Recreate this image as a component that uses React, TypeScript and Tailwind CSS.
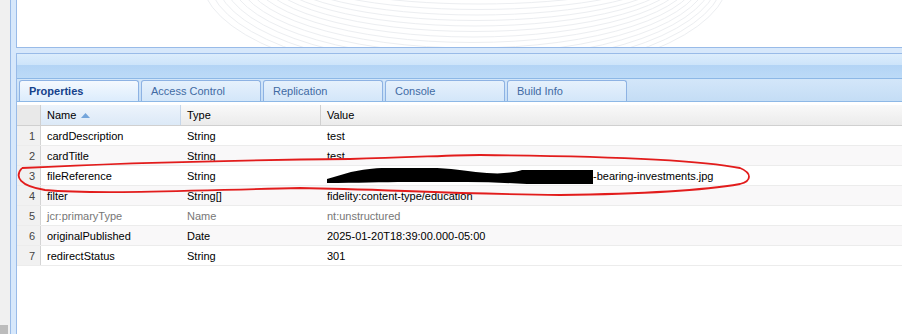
import React from "react";

type Row = { n: number; name: string; type: string; value: string; muted?: boolean; redacted?: boolean };

const rows: Row[] = [
  { n: 1, name: "cardDescription", type: "String", value: "test" },
  { n: 2, name: "cardTitle", type: "String", value: "test" },
  { n: 3, name: "fileReference", type: "String", value: "-bearing-investments.jpg", redacted: true },
  { n: 4, name: "filter", type: "String[]", value: "fidelity:content-type/education" },
  { n: 5, name: "jcr:primaryType", type: "Name", value: "nt:unstructured", muted: true },
  { n: 6, name: "originalPublished", type: "Date", value: "2025-01-20T18:39:00.000-05:00" },
  { n: 7, name: "redirectStatus", type: "String", value: "301" },
];

const tabs = ["Properties", "Access Control", "Replication", "Console", "Build Info"];

function Swirl() {
  const items = Array.from({ length: 15 }, (_, i) => i);
  return (
    <svg width="885" height="47" className="block">
      {items.map((i) => (
        <ellipse
          key={i}
          cx={462 - i * 1}
          cy={-30 + i * 0.5}
          rx={180 + i * 6}
          ry={34 + i * 5}
          fill="none"
          stroke="#eceef1"
          strokeWidth="1"
        />
      ))}
    </svg>
  );
}

function Redaction() {
  return (
    <svg width="266" height="19" viewBox="0 0 266 19" className="block shrink-0">
      <path
        d="M0 12 C8 10 16 7 24 5 C35 3 45 1 60 1 L110 1 C130 2 145 5 160 6 C175 7 185 6 195 3 L266 3 L266 17 L200 17 C180 16 160 15 140 15 L80 15 C55 15 30 16 0 16 Z"
        fill="#000"
      />
    </svg>
  );
}

export default function App() {
  return (
    <div className="relative w-[902px] h-[334px] overflow-hidden bg-[#f0f0f0] flex font-['Liberation_Sans',Arial,sans-serif] text-[11px]">
      <div className="w-[10px] flex flex-col justify-end">
        <div className="w-[8px] h-[9px] bg-[#bcbcbc]" />
      </div>
      <div className="flex-1 border-l border-[#99bbe8] bg-[#d7e8fb] pl-[5px] flex flex-col">
        <div className="h-[48px] border-l border-b border-[#99bbe8] bg-white overflow-hidden">
          <Swirl />
        </div>
        <div className="h-[5px]" />
        <div className="flex-1 border-l border-t border-[#99bbe8] bg-white flex flex-col">
          <div className="h-[25px] border-b border-[#8db8e6] flex flex-col">
            <div className="h-[11px] bg-linear-to-b from-[#dcedfc] to-[#cde4fa]" />
            <div className="flex-1 bg-linear-to-b from-[#b3d4f5] to-[#bcdaf7]" />
          </div>
          <div className="h-[23px] border-b border-[#8db8e6] bg-linear-to-b from-[#d3e6f9] to-[#c4ddf5] pt-[1px] pl-[2px] flex gap-[2px]">
            {tabs.map((t, i) => (
              <div
                key={t}
                className={
                  "w-[120px] h-[21px] rounded-t-[3px] border border-b-0 border-[#8db2e3] pl-[9px] pt-[1px] flex items-center " +
                  (i === 0
                    ? "bg-linear-to-b from-[#f4f9fe] to-[#dcecfc] font-bold text-[#15428b]"
                    : "bg-linear-to-b from-[#e6f1fc] to-[#d3e6f9] text-[#416aa3]")
                }
              >
                {t}
              </div>
            ))}
          </div>
          <div className="h-[3px] bg-white" />
          <div className="h-[21px] flex border-b border-[#d0d0d0] bg-linear-to-b from-[#f9f9f9] to-[#ebebeb] text-black">
            <div className="w-[24px] border-r border-[#d0d0d0] bg-[#e9e9e9]" />
            <div className="w-[140px] border-r border-[#c5d6ea] bg-linear-to-b from-[#edf4fc] to-[#dce9f7] pl-[6px] pt-[1px] flex items-center gap-[5px]">
              <span>Name</span>
              <svg width="9" height="5" viewBox="0 0 9 5">
                <path d="M0 5 L4.5 0 L9 5 Z" fill="#74a5db" />
              </svg>
            </div>
            <div className="w-[140px] border-r border-[#d0d0d0] pl-[6px] pt-[1px] flex items-center">Type</div>
            <div className="flex-1 pl-[6px] pt-[1px] flex items-center">Value</div>
          </div>
          {rows.map((r) => (
            <div
              key={r.n}
              className={
                "h-[20px] flex border-b border-[#ececec] " +
                (r.n % 2 === 0 ? "bg-[#f9f8f9] " : "bg-white ") +
                (r.muted ? "text-[#777]" : "text-black")
              }
            >
              <div className="w-[24px] border-r border-[#d4d4d4] bg-[#f1f1f1] text-[#444] pr-[5px] pt-[1px] flex items-center justify-end">
                {r.n}
              </div>
              <div className="w-[140px] pl-[6px] pt-[1px] flex items-center">{r.name}</div>
              <div className="w-[140px] pl-[6px] pt-[1px] flex items-center">{r.type}</div>
              <div className="flex-1 pl-[6px] pt-[1px] flex items-center">
                {r.redacted && <Redaction />}
                <span>{r.value}</span>
              </div>
            </div>
          ))}
          <div className="flex-1 bg-white" />
        </div>
      </div>
      <svg width="902" height="334" className="absolute left-0 top-0 pointer-events-none">
        <path
          d="M22 168 C120 163 250 160 350 159 C420 157 460 155 480 155 C600 156 700 160 740 168 C752 173 752 181 740 184 C700 191 640 194 560 195 C450 194 380 189 300 188 C200 190 100 195 45 190 C20 186 14 177 22 168"
          fill="none"
          stroke="#e21c1c"
          strokeWidth="1.8"
        />
      </svg>
    </div>
  );
}
